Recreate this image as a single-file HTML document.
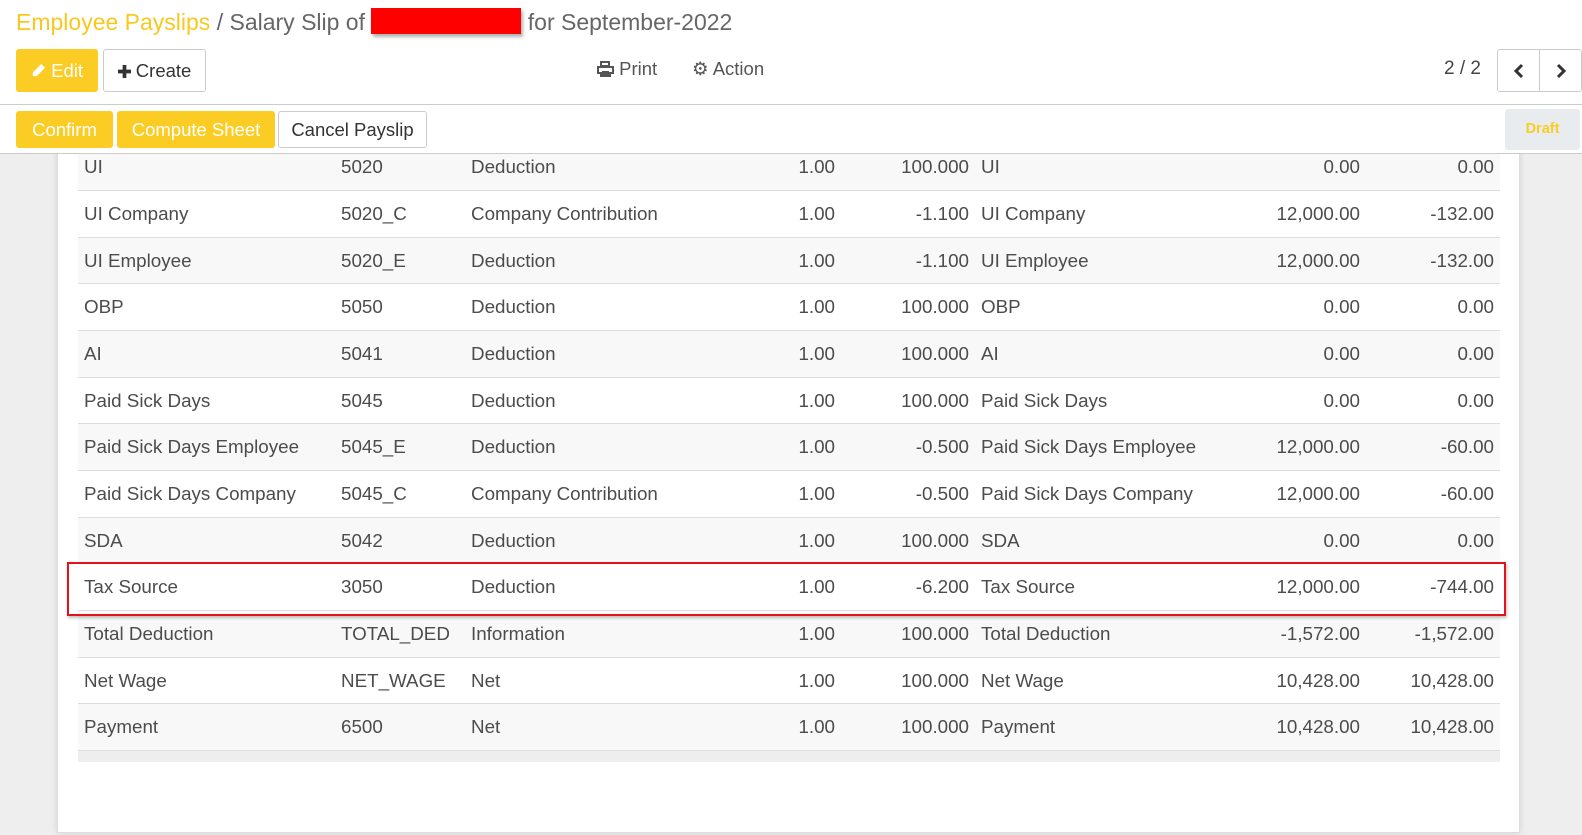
<!DOCTYPE html>
<html><head><meta charset="utf-8"><style>
*{box-sizing:border-box;margin:0;padding:0}
body{width:1582px;height:835px;overflow:hidden;background:#eeeeee;font-family:"Liberation Sans",sans-serif;color:#4c4c4c;position:relative}
.top{position:absolute;left:0;top:0;width:1582px;height:105px;background:#fff;border-bottom:1px solid #ccc;z-index:3}
.bar{position:absolute;left:0;top:105px;width:1582px;height:49px;background:#fff;border-bottom:1px solid #ccc;z-index:3}
.bc{position:absolute;left:16px;top:8px;font-size:23px;color:#666}
.bc .y{color:#f9c820}
.red{display:inline-block;width:150px;height:26px;background:#f00;vertical-align:-4px;box-shadow:2px 3px 3px rgba(0,0,0,.3)}
.btn{position:absolute;height:43px;font-size:18.5px;line-height:41px;text-align:center;border-radius:3px;border:1px solid #ccc;background:#fff;color:#333}
.btn.p{background:#fbcd24;border-color:#fbcd24;color:#fff}
.sheet{position:absolute;left:57px;top:140px;width:1463px;height:693px;background:#fff;border:1px solid #ddd;box-shadow:0 0 6px rgba(0,0,0,.12)}
table{position:absolute;left:78px;top:144px;width:1422px;border-collapse:collapse;font-size:18.8px;table-layout:fixed}
td{height:46.67px;border-bottom:1px solid #ddd;padding:0 6px;white-space:nowrap}
tr:nth-child(odd) td{background:#f8f8f8}
.r{text-align:right}
.foot{position:absolute;left:78px;top:751px;width:1422px;height:11px;background:#eee}
.box{position:absolute;left:67px;top:562px;width:1439px;height:54px;border:2px solid #e3131b;box-shadow:1px 2px 3px rgba(0,0,0,.25);z-index:2}
.ic{position:absolute;font-size:18.5px;color:#555;top:58px}
</style></head><body>
<div class="sheet"></div>
<table>
<colgroup><col style="width:257px"><col style="width:130px"><col style="width:280px"><col style="width:96px"><col style="width:134px"><col style="width:250px"><col style="width:141px"><col style="width:134px"></colgroup>
<tr><td>UI</td><td>5020</td><td>Deduction</td><td class="r">1.00</td><td class="r">100.000</td><td>UI</td><td class="r">0.00</td><td class="r">0.00</td></tr>
<tr><td>UI Company</td><td>5020_C</td><td>Company Contribution</td><td class="r">1.00</td><td class="r">-1.100</td><td>UI Company</td><td class="r">12,000.00</td><td class="r">-132.00</td></tr>
<tr><td>UI Employee</td><td>5020_E</td><td>Deduction</td><td class="r">1.00</td><td class="r">-1.100</td><td>UI Employee</td><td class="r">12,000.00</td><td class="r">-132.00</td></tr>
<tr><td>OBP</td><td>5050</td><td>Deduction</td><td class="r">1.00</td><td class="r">100.000</td><td>OBP</td><td class="r">0.00</td><td class="r">0.00</td></tr>
<tr><td>AI</td><td>5041</td><td>Deduction</td><td class="r">1.00</td><td class="r">100.000</td><td>AI</td><td class="r">0.00</td><td class="r">0.00</td></tr>
<tr><td>Paid Sick Days</td><td>5045</td><td>Deduction</td><td class="r">1.00</td><td class="r">100.000</td><td>Paid Sick Days</td><td class="r">0.00</td><td class="r">0.00</td></tr>
<tr><td>Paid Sick Days Employee</td><td>5045_E</td><td>Deduction</td><td class="r">1.00</td><td class="r">-0.500</td><td>Paid Sick Days Employee</td><td class="r">12,000.00</td><td class="r">-60.00</td></tr>
<tr><td>Paid Sick Days Company</td><td>5045_C</td><td>Company Contribution</td><td class="r">1.00</td><td class="r">-0.500</td><td>Paid Sick Days Company</td><td class="r">12,000.00</td><td class="r">-60.00</td></tr>
<tr><td>SDA</td><td>5042</td><td>Deduction</td><td class="r">1.00</td><td class="r">100.000</td><td>SDA</td><td class="r">0.00</td><td class="r">0.00</td></tr>
<tr><td>Tax Source</td><td>3050</td><td>Deduction</td><td class="r">1.00</td><td class="r">-6.200</td><td>Tax Source</td><td class="r">12,000.00</td><td class="r">-744.00</td></tr>
<tr><td>Total Deduction</td><td>TOTAL_DED</td><td>Information</td><td class="r">1.00</td><td class="r">100.000</td><td>Total Deduction</td><td class="r">-1,572.00</td><td class="r">-1,572.00</td></tr>
<tr><td>Net Wage</td><td>NET_WAGE</td><td>Net</td><td class="r">1.00</td><td class="r">100.000</td><td>Net Wage</td><td class="r">10,428.00</td><td class="r">10,428.00</td></tr>
<tr><td>Payment</td><td>6500</td><td>Net</td><td class="r">1.00</td><td class="r">100.000</td><td>Payment</td><td class="r">10,428.00</td><td class="r">10,428.00</td></tr>
</table>
<div class="foot"></div>
<div class="box"></div>
<div class="top">
<div class="bc"><span class="y">Employee Payslips</span> / Salary Slip of <span class="red"></span> for September-2022</div>
<div class="btn p" style="left:16px;top:49px;width:82px"><svg width="15" height="15" viewBox="0 0 16 16" style="vertical-align:-1px"><path d="M11 1l4 4-9 9H2v-4z" fill="#fff"/></svg> Edit</div>
<div class="btn" style="left:103px;top:49px;width:103px"><svg width="13" height="13" viewBox="0 0 14 14" style="vertical-align:-1px"><path d="M5 0h4v5h5v4H9v5H5V9H0V5h5z" fill="#333"/></svg> Create</div>
<div class="ic" style="left:597px"><svg width="17" height="16" viewBox="0 0 17 16" style="vertical-align:-2px"><path d="M4 1h8v4H4z M1 6h15v6h-3v3H4v-3H1z" fill="none" stroke="#555" stroke-width="2"/><rect x="5" y="10" width="7" height="4" fill="#555"/></svg> Print</div>
<div class="ic" style="left:692px">&#9881; Action</div>
<div style="position:absolute;left:1444px;top:58px;font-size:19px;color:#444">2 / 2</div>
<div class="btn" style="left:1497px;top:49px;width:43px;border-radius:3px 0 0 3px"><svg width="12" height="16" viewBox="0 0 12 16" style="vertical-align:-2px"><path d="M9 2L3 8l6 6" fill="none" stroke="#333" stroke-width="3"/></svg></div>
<div class="btn" style="left:1539px;top:49px;width:43px;border-radius:0 3px 3px 0"><svg width="12" height="16" viewBox="0 0 12 16" style="vertical-align:-2px"><path d="M3 2l6 6-6 6" fill="none" stroke="#333" stroke-width="3"/></svg></div>
</div>
<div class="bar">
<div class="btn p" style="left:16px;top:6px;width:97px;height:37px;line-height:35px">Confirm</div>
<div class="btn p" style="left:117px;top:6px;width:158px;height:37px;line-height:35px">Compute Sheet</div>
<div class="btn" style="left:278px;top:6px;width:149px;height:37px;line-height:35px">Cancel Payslip</div>
<div style="position:absolute;left:1505px;top:4px;width:75px;height:41px;background:#e9ecef;border-radius:3px;color:#fbcd24;font-weight:bold;font-size:14.5px;line-height:41px;text-align:center">Draft</div>
</div>
</body></html>
